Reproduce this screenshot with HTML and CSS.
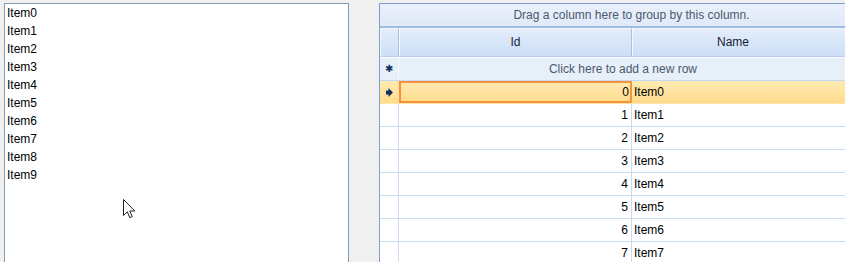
FILE: index.html
```html
<!DOCTYPE html>
<html lang="en">
<head>
    <meta charset="UTF-8">
    <title>Items</title>
    <link rel="stylesheet" href="styles.css">
</head>
<body>

    <div class="list-box">
        <div class="list-item">Item0</div>
        <div class="list-item">Item1</div>
        <div class="list-item">Item2</div>
        <div class="list-item">Item3</div>
        <div class="list-item">Item4</div>
        <div class="list-item">Item5</div>
        <div class="list-item">Item6</div>
        <div class="list-item">Item7</div>
        <div class="list-item">Item8</div>
        <div class="list-item">Item9</div>
    </div>

    <div class="grid">
        <div class="group-panel">Drag a column here to group by this column.</div>

        <div class="row header-row">
            <div class="cell indicator"></div>
            <div class="cell id-col">Id</div>
            <div class="cell name-col">Name</div>
        </div>

        <div class="row new-row">
            <div class="cell indicator">&#10033;</div>
            <div class="cell new-row-text">Click here to add a new row</div>
        </div>

        <div class="row data-row current">
            <div class="cell indicator">
                <svg width="7" height="9" viewBox="0 0 7 9"><path d="M0 2.5h2.5V0L7 4.5 2.5 9V6.5H0z" fill="#15305e"/></svg>
            </div>
            <div class="cell id-col">0</div>
            <div class="cell name-col">Item0</div>
        </div>
        <div class="row data-row">
            <div class="cell indicator"></div>
            <div class="cell id-col">1</div>
            <div class="cell name-col">Item1</div>
        </div>
        <div class="row data-row">
            <div class="cell indicator"></div>
            <div class="cell id-col">2</div>
            <div class="cell name-col">Item2</div>
        </div>
        <div class="row data-row">
            <div class="cell indicator"></div>
            <div class="cell id-col">3</div>
            <div class="cell name-col">Item3</div>
        </div>
        <div class="row data-row">
            <div class="cell indicator"></div>
            <div class="cell id-col">4</div>
            <div class="cell name-col">Item4</div>
        </div>
        <div class="row data-row">
            <div class="cell indicator"></div>
            <div class="cell id-col">5</div>
            <div class="cell name-col">Item5</div>
        </div>
        <div class="row data-row">
            <div class="cell indicator"></div>
            <div class="cell id-col">6</div>
            <div class="cell name-col">Item6</div>
        </div>
        <div class="row data-row">
            <div class="cell indicator"></div>
            <div class="cell id-col">7</div>
            <div class="cell name-col">Item7</div>
        </div>
    </div>

    <!-- mouse pointer sitting over the list -->
    <svg class="pointer" width="13" height="20" viewBox="0 0 13 20">
        <path d="M0.5 0.5V16.5L4.3 12.8L6.8 18.6L9.2 17.6L6.8 12H11.8Z" fill="#fff" stroke="#1e1e28" stroke-width="1" stroke-linejoin="miter"/>
    </svg>

</body>
</html>
```

FILE: styles.css
```css
body {
    margin: 0;
    padding: 3px 0 0 4px;
    background-color: #f0f0f0;
    font-family: "Liberation Sans", Arial, sans-serif;
    font-size: 12px;
    color: #000;
    display: flex;
    gap: 30px;
    height: 262px;
    overflow: hidden;
    box-sizing: border-box;
    position: relative;
}

.list-box {
    width: 345px;
    flex-shrink: 0;
    height: 300px;
    background-color: #fff;
    border: 1px solid #7f9db9;
    box-sizing: border-box;
    padding: 0 0 0 2px;
}

.list-item {
    height: 18px;
    line-height: 18px;
}

.grid {
    width: 505px;
    flex-shrink: 0;
    height: 300px;
    background-color: #fff;
    border: 1px solid #7d9fcf;
    box-sizing: border-box;
}

.group-panel {
    height: 22px;
    line-height: 22px;
    text-align: center;
    color: #4b596d;
    background: linear-gradient(#e9f0fb, #dfe9f8);
    border-bottom: 1px solid #a5bde0;
}

.row {
    display: grid;
    grid-template-columns: 19px 233px 1fr;
}

.cell {
    box-sizing: border-box;
    overflow: hidden;
    white-space: nowrap;
}

.header-row {
    height: 30px;
    background-color: #9fbbe2;
    padding-top: 1px;
    box-sizing: border-box;
}

.header-row .cell {
    background: linear-gradient(#e4edfa, #d6e5f8 55%, #cddff6);
    border-top: 1px solid #f4f8fe;
    border-left: 1px solid #f4f8fe;
    border-right: 1px solid #a9c2e4;
    border-bottom: 1px solid #b8cde9;
    line-height: 27px;
    text-align: center;
    color: #1b1b33;
}

.header-row .name-col {
    padding-right: 50px;
    border-right: none;
}

.new-row {
    height: 24px;
    grid-template-columns: 19px 1fr;
    background-color: #e7eff9;
    border-top: 1px solid #f7faff;
    border-bottom: 1px solid #c6d8f1;
    box-sizing: border-box;
}

.new-row .indicator {
    text-align: center;
    font-size: 10px;
    line-height: 22px;
    color: #15305e;
    border-right: 1px solid #f7faff;
}

.new-row-text {
    text-align: center;
    line-height: 22px;
    color: #4b596d;
    padding-right: 36px;
}

.data-row {
    height: 23px;
    border-bottom: 1px solid #c8dbf3;
    box-sizing: border-box;
}

.data-row .cell {
    line-height: 22px;
}

.data-row .indicator {
    border-right: 1px solid #c8dbf3;
}

.data-row .id-col {
    text-align: right;
    padding-right: 3px;
    border-right: 1px solid #c8dbf3;
}

.data-row .name-col {
    padding-left: 2px;
}

.data-row.current {
    background: linear-gradient(#ffebb3, #ffdc8c);
    border-bottom: 1px solid #ffe6a6;
}

.data-row.current .indicator {
    display: flex;
    align-items: center;
    justify-content: center;
    border-right-color: #ffe2a0;
}

.data-row.current .id-col {
    border: 2px solid #f7923a;
    line-height: 18px;
    padding-right: 1px;
}

.pointer {
    position: absolute;
    left: 123px;
    top: 199px;
}
```
